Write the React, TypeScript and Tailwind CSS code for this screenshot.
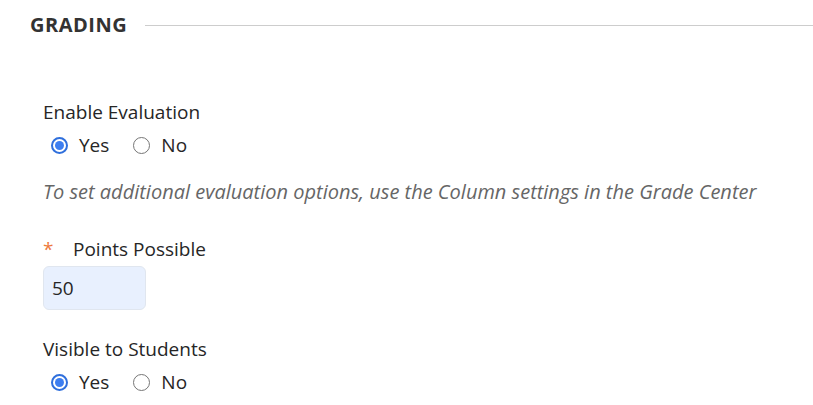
import React, { useState } from 'react';

const font = { fontFamily: '"Open Sans", "Noto Sans", sans-serif' };

function Radio({ checked, label, onClick }: { checked: boolean; label: string; onClick: () => void }) {
  return (
    <label onClick={onClick} className="flex items-center gap-[11px] cursor-pointer">
      {checked ? (
        <span className="w-[17px] h-[17px] rounded-full border-2 border-[#2f6fdc] flex items-center justify-center">
          <span className="w-[9px] h-[9px] rounded-full bg-[#3d7ef0]" />
        </span>
      ) : (
        <span className="w-[17px] h-[17px] rounded-full border border-[#767676]" />
      )}
      <span>{label}</span>
    </label>
  );
}

function YesNo({ value, onChange }: { value: boolean; onChange: (v: boolean) => void }) {
  return (
    <div className="flex items-center gap-[24px] pl-[8px] mt-[7px]">
      <Radio checked={value} label="Yes" onClick={() => onChange(true)} />
      <Radio checked={!value} label="No" onClick={() => onChange(false)} />
    </div>
  );
}

export default function App() {
  const [evalOn, setEvalOn] = useState(true);
  const [visible, setVisible] = useState(true);
  const [points, setPoints] = useState('50');

  return (
    <div className="w-[813px] h-[405px] bg-white text-[#262626] overflow-hidden" style={font}>
      <div className="flex items-center pl-[30px] pt-[11px]">
        <h2 className="text-[20px] leading-[28px] font-bold tracking-[0.5px] text-[#333]">GRADING</h2>
        <div className="flex-1 h-px bg-[#cdcdcd] ml-[18px]" />
      </div>

      <div className="pl-[43px] text-[19px] leading-[26px]">
        <div className="mt-[60px]">Enable Evaluation</div>
        <YesNo value={evalOn} onChange={setEvalOn} />

        <p className="italic text-[20px] text-[#666] mt-[21px]">
          To set additional evaluation options, use the Column settings in the Grade Center
        </p>

        <div className="mt-[31px] flex items-center">
          <span className="text-[#ee7a3c] w-[30px]">*</span>
          <span>Points Possible</span>
        </div>
        <input
          value={points}
          onChange={(e) => setPoints(e.target.value)}
          className="mt-[4px] w-[103px] h-[44px] rounded-[6px] bg-[#e8f0fe] border border-[#e0e6ef] px-[8px] text-[19px] outline-none"
        />

        <div className="mt-[26px]">Visible to Students</div>
        <YesNo value={visible} onChange={setVisible} />
      </div>
    </div>
  );
}
